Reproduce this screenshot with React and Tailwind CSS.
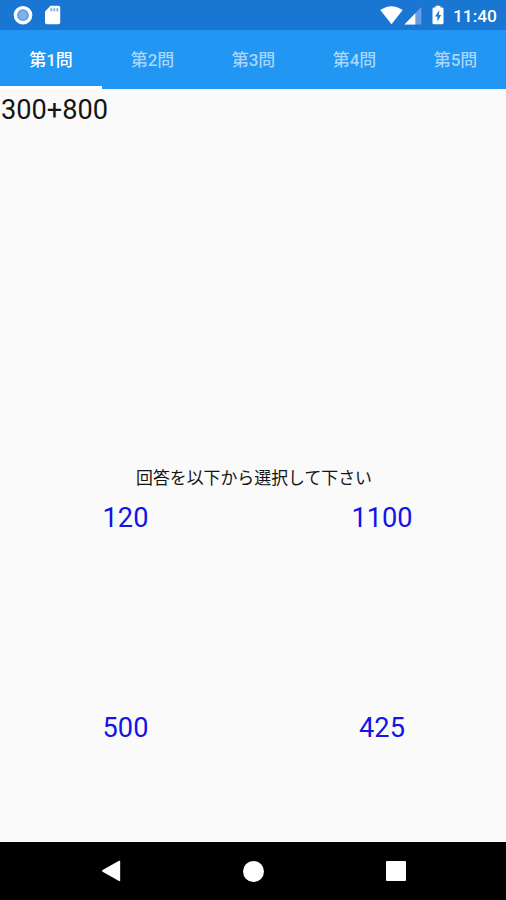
const tabs = ['第1問', '第2問', '第3問', '第4問', '第5問'];
const answers = ['120', '1100', '500', '425'];

function StatusBar() {
  return (
    <header className="flex h-[30px] items-center bg-[#1976d2] pl-[13px] pr-[9px] text-white">
      <svg className="h-5 w-5" viewBox="0 0 20 20">
        <circle cx="10" cy="10.2" r="9.3" fill="#fff" />
        <circle cx="10" cy="10.2" r="5.9" fill="#5e9ee2" />
        <circle cx="10" cy="10.2" r="4.2" fill="#7fb1ec" />
      </svg>
      <svg className="ml-3 h-5 w-4" viewBox="0 0 16 20">
        <path
          d="M5.5 .8H13.5Q15.2 .8 15.2 2.5V17.5Q15.2 19.2 13.5 19.2H1.8Q0 19.2 0 17.5V6.5Z"
          fill="#fff"
        />
        <path d="M5.5 3.2h1.7v3H5.5zM8.5 3.2h1.7v3H8.5zM11.5 3.2h1.7v3h-1.7z" fill="#6da7e8" />
      </svg>
      <div className="ml-auto flex items-center">
        <svg className="h-5 w-[23px]" viewBox="0 0 23 20">
          <path d="M.3 5Q11.5-2.7 22.7 5L11.5 19.2Z" fill="#fff" />
        </svg>
        <svg className="ml-px h-5 w-[18px]" viewBox="0 0 18 20">
          <path d="M.5 19.5L17.3 2V19.5Z" fill="#669fe2" />
          <path d="M.5 19.5L11.3 8.3V19.5Z" fill="#fff" />
        </svg>
        <svg className="ml-[10px] h-5 w-3" viewBox="0 0 12 20">
          <path
            d="M3.5 .8h5v1.7h1.7Q11.5 2.5 11.5 3.8V18Q11.5 19.3 10.2 19.3H1.8Q.5 19.3 .5 18V3.8Q.5 2.5 1.8 2.5H3.5Z"
            fill="#fff"
          />
          <path d="M7.5 5L3 11.4H5.4V16.5L9.2 9.9H6.7Z" fill="#1976d2" />
        </svg>
        <span className="ml-[9px] mt-[2px] text-[17.4px] font-medium leading-5">11:40</span>
      </div>
    </header>
  );
}

function TabBar() {
  return (
    <nav className="grid h-[59px] grid-cols-[102px_repeat(4,101px)] bg-[#2196f3] text-[17px] font-medium">
      {tabs.map((tab, i) => (
        <div
          key={tab}
          className={
            i === 0
              ? 'flex items-center justify-center border-b-[3px] border-white pt-[5px] text-white'
              : 'flex items-center justify-center border-b-[3px] border-transparent pt-[5px] text-[#a9d5fb]'
          }
        >
          {tab}
        </div>
      ))}
    </nav>
  );
}

function NavigationBar() {
  return (
    <footer className="flex h-[58px] items-center justify-between bg-black pl-[102px] pr-[100px]">
      <svg className="h-[22px] w-[19px]" viewBox="0 0 19 22">
        <path d="M.6 10.1L17 .8Q18.2 .3 18.2 1.5V20.5Q18.2 21.7 17 21.1L.6 11.8Q-.4 11 .6 10.1Z" fill="#fff" />
      </svg>
      <div className="h-[21px] w-[21px] rounded-full bg-white" />
      <div className="h-5 w-5 rounded-[1px] bg-white" />
    </footer>
  );
}

export default function App() {
  return (
    <div className="flex h-[900px] w-[506px] flex-col overflow-hidden bg-[#fafafa] font-[Roboto,'Noto_Sans_CJK_JP',sans-serif]">
      <StatusBar />
      <TabBar />
      <main className="flex flex-1 flex-col">
        <p className="h-[376px] pl-px pt-[5px] text-[27.2px] leading-8 text-[#151515]">300+800</p>
        <p className="h-[37px] pl-[2px] text-center text-[16.9px] leading-[26px] text-[#151515]">
          回答を以下から選択して下さい
        </p>
        <div className="grid flex-1 grid-cols-[251px_1fr] grid-rows-[210px_1fr] text-center text-[27.2px] leading-8 text-[#1414e6]">
          {answers.map((answer) => (
            <span key={answer} className="even:pl-[7px]">
              {answer}
            </span>
          ))}
        </div>
      </main>
      <NavigationBar />
    </div>
  );
}
